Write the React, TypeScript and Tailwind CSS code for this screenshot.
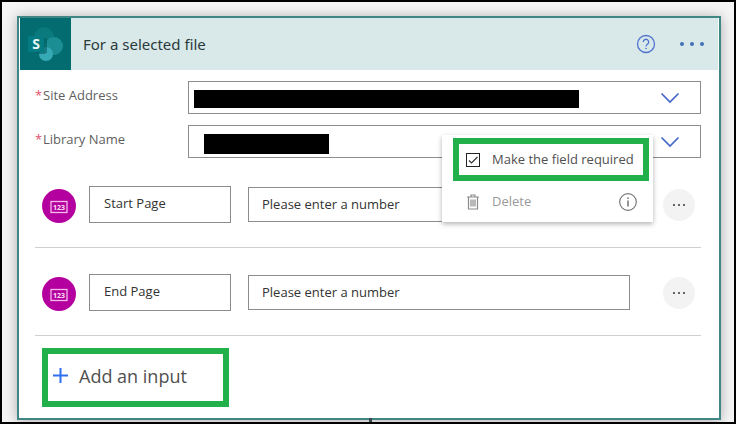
import { useState } from 'react';

interface InputRow {
  id: string;
  name: string;
  prompt: string;
}

const inputRows: InputRow[] = [
  { id: 'start', name: 'Start Page', prompt: 'Please enter a number' },
  { id: 'end', name: 'End Page', prompt: 'Please enter a number' },
];

function SharePointLogo() {
  return (
    <svg viewBox="0 0 51 52" className="w-[51px] h-[52px]" aria-hidden="true">
      <rect width="51" height="52" fill="#036c70" />
      <circle cx="24" cy="19" r="10" fill="#0b7a7d" />
      <circle cx="34" cy="28" r="9" fill="#1b8e93" />
      <circle cx="26" cy="36" r="7" fill="#36a9b6" />
      <path d="M14 20h13v13a3 3 0 0 1-3 3h-4a6 6 0 0 1-6-6z" fill="#035a5e" opacity="0.6" />
      <rect x="8" y="18" width="16" height="16" rx="1" fill="#047b80" />
      <text x="16" y="31" textAnchor="middle" fontFamily="Open Sans, sans-serif" fontSize="14" fontWeight="700" fill="#e8f6f6">
        S
      </text>
    </svg>
  );
}

function HelpIcon() {
  return (
    <svg viewBox="0 0 20 20" className="w-5 h-5" fill="none" stroke="#5173d0" aria-hidden="true">
      <circle cx="10" cy="10" r="8.5" strokeWidth="1.3" />
      <path d="M7.3 8a2.7 2.7 0 1 1 4.2 2.2c-1 .7-1.5 1.1-1.5 2.3" strokeWidth="1.3" />
      <circle cx="10" cy="14.5" r=".5" fill="#5173d0" strokeWidth=".6" />
    </svg>
  );
}

function ChevronIcon() {
  return (
    <svg
      viewBox="0 0 20 12"
      className="absolute right-[21px] top-1/2 -translate-y-1/2 w-5 h-3 pointer-events-none"
      fill="none"
      stroke="#4468c8"
      strokeWidth="1.7"
      aria-hidden="true"
    >
      <path d="M1.5 1.5 10 10l8.5-8.5" />
    </svg>
  );
}

function NumberIcon() {
  return (
    <span className="flex items-center justify-center shrink-0 w-[34px] h-[34px] pt-0.5 rounded-full bg-[#b4009e]">
      <svg viewBox="0 0 18 14" className="w-[18px] h-[14px]" aria-hidden="true">
        <rect x="1" y="1.5" width="16" height="11" fill="none" stroke="#f6b9ec" strokeWidth="1.3" />
        <text x="9" y="9.500" textAnchor="middle" fontFamily="Open Sans, sans-serif" fontSize="7" fontWeight="700" fill="#fbe3f7">
          123
        </text>
      </svg>
    </span>
  );
}

function TrashIcon() {
  return (
    <svg viewBox="0 0 14 18" className="w-[14px] h-[18px]" fill="none" stroke="#8a8a8a" strokeWidth="1.2" aria-hidden="true">
      <path d="M1 4h12M5 4V2h4v2M2.5 4v12h9V4M5 6.5v7M7 6.5v7M9 6.5v7" />
    </svg>
  );
}

function InfoIcon() {
  return (
    <svg viewBox="0 0 20 20" className="w-5 h-5" fill="none" stroke="#7a7a7a" aria-hidden="true">
      <circle cx="10" cy="10" r="8.3" strokeWidth="1.2" />
      <path d="M10 8.5v6M10 5.5v1.5" strokeWidth="1.6" />
    </svg>
  );
}

function PickerField({ id, label, redactedClass }: { id: string; label: string; redactedClass: string }) {
  return (
    <div className="flex">
      <label htmlFor={id} className="w-[153px] shrink-0 pt-1 text-[13px] leading-5 text-[#5f5f5f]">
        <span className="inline-block w-2 text-[#e0506a]">*</span>
        {label}
      </label>
      <div className="relative flex-1">
        <select id={id} className="block w-full h-[33px] appearance-none border border-[#8c8c8c] bg-white">
          <option value=""></option>
        </select>
        <span className={redactedClass} aria-hidden="true" />
        <ChevronIcon />
      </div>
    </div>
  );
}

function FieldMenu() {
  const [required, setRequired] = useState(true);

  return (
    <div className="absolute right-[66px] top-[65px] z-10 w-[211px] h-[87px] bg-white shadow-[0_2px_5px_rgba(0,0,0,0.3)]">
      <label className="flex items-center ml-[11px] mr-1 mt-[3px] h-[43px] border-6 border-[#22b04b] pl-[7px] text-[13px] text-[#505050] whitespace-nowrap">
        <span className="relative flex mr-3">
          <input
            type="checkbox"
            checked={required}
            onChange={(e) => setRequired(e.target.checked)}
            className="w-[14px] h-[14px] appearance-none border border-[#222]"
          />
          {required && (
            <svg viewBox="0 0 14 14" className="absolute inset-0 pointer-events-none" fill="none" stroke="#333" strokeWidth="1.2" aria-hidden="true">
              <path d="m3 7.5 2.5 2.5L11.5 4" />
            </svg>
          )}
        </span>
        Make the field required
      </label>
      <div className="flex items-center h-[41px] pl-6 pr-[15px]">
        <button type="button" disabled className="flex items-center gap-3 text-[13px] text-[#9a9a9a]">
          <TrashIcon />
          Delete
        </button>
        <button type="button" aria-label="Delete info" className="ml-auto">
          <InfoIcon />
        </button>
      </div>
    </div>
  );
}

function ParameterRow({ row }: { row: InputRow }) {
  return (
    <div className="flex items-end border-b border-[#cfcfcf] pt-[26px] pb-6 pl-[7px] pr-1.5 text-[13px] text-[#333]">
      <NumberIcon />
      <input
        aria-label={`${row.name} title`}
        defaultValue={row.name}
        className="ml-[13px] w-[142px] h-[37px] border border-[#8c8c8c] px-[14px] pb-1"
      />
      <input
        aria-label={`${row.name} description`}
        defaultValue={row.prompt}
        className="self-center ml-[17px] mr-[33px] flex-1 min-w-0 h-[35px] border border-[#8c8c8c] px-[13px] pb-0.5"
      />
      <button
        type="button"
        aria-label={`${row.name} options`}
        className="self-center flex items-center justify-center gap-[3px] shrink-0 w-8 h-8 rounded-full bg-[#f3f3f3]"
      >
        <span className="w-0.5 h-0.5 bg-[#666]" />
        <span className="w-0.5 h-0.5 bg-[#666]" />
        <span className="w-0.5 h-0.5 bg-[#666]" />
      </button>
    </div>
  );
}

export default function App() {
  return (
    <div className="min-h-screen border-2 border-black bg-[#f5f5f5] pl-[15px] pr-[13px] pt-[14px] pb-0.5 font-['Open_Sans',sans-serif]">
      <section className="relative border-2 border-[#3f8684] bg-white shadow-[0_1px_12px_rgba(0,0,0,0.3)]">
        <header className="flex items-center mx-px h-[52px] bg-[#d9e9e9]">
          <SharePointLogo />
          <h1 className="ml-3 font-['Noto_Sans',sans-serif] text-[15px] text-[#2b3a3c]">For a selected file</h1>
          <button type="button" aria-label="Help" className="ml-auto">
            <HelpIcon />
          </button>
          <button type="button" aria-label="More commands" className="flex gap-1.5 ml-6 mr-[14px]">
            <span className="w-1 h-1 rounded-full bg-[#3f70b8]" />
            <span className="w-1 h-1 rounded-full bg-[#3f70b8]" />
            <span className="w-1 h-1 rounded-full bg-[#3f70b8]" />
          </button>
        </header>

        <div className="relative pl-4 pr-[18px] pt-[11px] pb-[11px]">
          <div className="flex flex-col gap-[11px] mb-0.5">
            <PickerField
              id="site"
              label="Site Address"
              redactedClass="absolute left-1.5 top-[9px] w-3/4 h-[18px] bg-black pointer-events-none"
            />
            <PickerField
              id="library"
              label="Library Name"
              redactedClass="absolute left-4 top-[9px] w-[125px] h-5 bg-black pointer-events-none"
            />
          </div>

          {inputRows.map((row) => (
            <ParameterRow key={row.id} row={row} />
          ))}

          <button
            type="button"
            className="flex items-center gap-[11px] ml-[7px] mt-3 w-[187px] h-[59px] border-6 border-[#22b04b] pl-[5px] pb-1 text-lg text-[#505050]"
          >
            <svg viewBox="0 0 15 15" className="w-[15px] h-[15px]" stroke="#2f6ff0" strokeWidth="2" aria-hidden="true">
              <path d="M7.5 0v15M0 7.5h15" />
            </svg>
            Add an input
          </button>

          <FieldMenu />
        </div>

        <span className="absolute left-1/2 top-full w-[3px] h-1 bg-[#3a4a4a]" aria-hidden="true" />
      </section>
    </div>
  );
}
